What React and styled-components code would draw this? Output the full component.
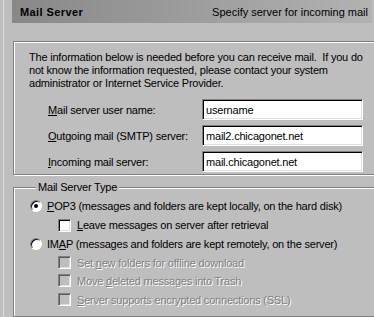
import styled, { createGlobalStyle } from "styled-components";

const GlobalStyle = createGlobalStyle`
  html, body {
    margin: 0;
    padding: 0;
    background: #bebebe;
    overflow: hidden;
  }
  body {
    font-family: "Liberation Sans", Arial, sans-serif;
    font-size: 11px;
    letter-spacing: -0.2px;
    color: #000;
  }
`;

const Page = styled.div`
  width: 374px;
  height: 317px;
  overflow: hidden;
  padding-left: 3px;
  box-sizing: border-box;
  background: #bebebe;
`;

const Frame = styled.div`
  height: 100%;
  border-left: 1px solid #dedede;
  padding-left: 8px;
  display: flex;
  flex-direction: column;
`;

const Header = styled.div`
  height: 23px;
  margin-right: 2px;
  display: flex;
  align-items: center;
  justify-content: space-between;
  padding: 0 4px 0 8px;
  background: linear-gradient(to right, #888, #b2b2b2);
`;

const HeaderTitle = styled.span`
  font-weight: bold;
  font-size: 11px;
  letter-spacing: 0.4px;
`;

const HeaderNote = styled.span`
  font-size: 11px;
  letter-spacing: 0;
`;

const Etched = styled.div`
  margin-left: 1px;
  margin-right: -12px;
  border: 1px solid #808080;
  box-shadow: inset 1px 1px 0 #fff, 1px 1px 0 #fff;
  box-sizing: border-box;
`;

const InfoBox = styled(Etched)`
  margin-top: 18px;
  height: 134px;
  padding: 9px 0 0 15px;
`;

const InfoText = styled.p`
  margin: 0;
  white-space: nowrap;
  line-height: 13px;
`;

const Form = styled.div`
  display: grid;
  grid-template-columns: 154px 161px;
  row-gap: 5px;
  align-items: center;
  margin: 9px 0 0 19px;
`;

const Label = styled.span`
  white-space: nowrap;
`;

const TextInput = styled.input`
  height: 21px;
  box-sizing: border-box;
  border: 1px solid;
  border-color: #808080 #fff #fff #808080;
  box-shadow: inset 1px 1px 0 #000, inset -1px -1px 0 #dfdfdf;
  background: #fff;
  font-family: inherit;
  font-size: 11px;
  letter-spacing: -0.2px;
  padding: 0 0 0 3px;
  outline: none;
`;

const GroupBox = styled.fieldset`
  margin: 6px -12px 0 1px;
  height: 136px;
  padding: 2px 0 0 16px;
  border: 1px solid #808080;
  box-shadow: inset 1px 1px 0 #fff, 1px 1px 0 #fff;
  box-sizing: border-box;
  min-width: 0;
`;

const Legend = styled.legend`
  padding: 0 2px;
  margin-left: 6px;
  background: #bebebe;
  line-height: 13px;
`;

const Option = styled.div`
  display: flex;
  align-items: center;
  height: ${(p) => p.$h}px;
  padding-left: ${(p) => (p.$indent ? 28 : 0)}px;
  gap: ${(p) => (p.$indent ? 6 : 5)}px;
  white-space: nowrap;
  color: ${(p) => (p.$disabled ? "#808080" : "#000")};
  text-shadow: ${(p) => (p.$disabled ? "1px 1px 0 #fff" : "none")};
`;

const Radio = styled.span`
  position: relative;
  width: 12px;
  height: 12px;
  box-sizing: border-box;
  border-radius: 50%;
  border: 1px solid;
  border-color: #808080 #fff #fff #808080;
  box-shadow: inset 1px 1px 0 #000;
  background: #fff;
  flex: none;
  &::after {
    content: "";
    display: ${(p) => (p.$checked ? "block" : "none")};
    position: absolute;
    left: 3px;
    top: 3px;
    width: 4px;
    height: 4px;
    border-radius: 50%;
    background: #000;
  }
`;

const Check = styled.span`
  width: 13px;
  height: 13px;
  box-sizing: border-box;
  border: 1px solid;
  border-color: #808080 #fff #fff #808080;
  box-shadow: inset 1px 1px 0 ${(p) => (p.$disabled ? "#5a5a5a" : "#000")},
    inset -1px -1px 0 #dfdfdf;
  background: ${(p) => (p.$disabled ? "#bebebe" : "#fff")};
  flex: none;
`;

const U = styled.span`
  text-decoration: underline;
`;

const App = () => {
  return (
    <>
      <GlobalStyle />
      <Page>
        <Frame>
          <Header>
            <HeaderTitle>Mail Server</HeaderTitle>
            <HeaderNote>Specify server for incoming mail</HeaderNote>
          </Header>
          <InfoBox>
            <InfoText>
              The information below is needed before you can receive mail.&nbsp; If you do
              <br />
              not know the information requested, please contact your system
              <br />
              administrator or Internet Service Provider.
            </InfoText>
            <Form>
              <Label><U>M</U>ail server user name:</Label>
              <TextInput defaultValue="username" />
              <Label><U>O</U>utgoing mail (SMTP) server:</Label>
              <TextInput defaultValue="mail2.chicagonet.net" />
              <Label><U>I</U>ncoming mail server:</Label>
              <TextInput defaultValue="mail.chicagonet.net" />
            </Form>
          </InfoBox>
          <GroupBox>
            <Legend>Mail Server Type</Legend>
            <Option $h={20}>
              <Radio $checked />
              <span><U>P</U>OP3 (messages and folders are kept locally, on the hard disk)</span>
            </Option>
            <Option $indent $h={18}>
              <Check />
              <span><U>L</U>eave messages on server after retrieval</span>
            </Option>
            <Option $h={20}>
              <Radio />
              <span>IM<U>A</U>P (messages and folders are kept remotely, on the server)</span>
            </Option>
            <Option $indent $disabled $h={17}>
              <Check $disabled />
              <span>Set <U>n</U>ew folders for offline download</span>
            </Option>
            <Option $indent $disabled $h={19}>
              <Check $disabled />
              <span>Move <U>d</U>eleted messages into Trash</span>
            </Option>
            <Option $indent $disabled $h={19}>
              <Check $disabled />
              <span><U>S</U>erver supports encrypted connections (SSL)</span>
            </Option>
          </GroupBox>
        </Frame>
      </Page>
    </>
  );
};

export default App;
